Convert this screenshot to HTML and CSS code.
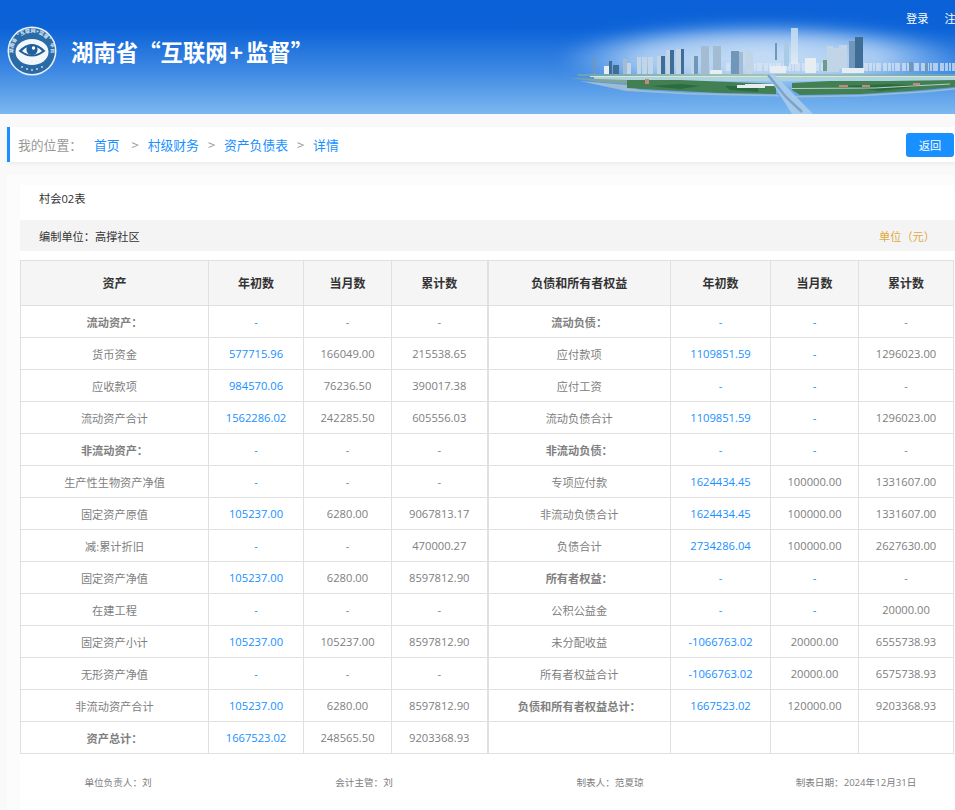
FILE: index.html
```html
<!DOCTYPE html>
<html lang="zh-CN">
<head>
<meta charset="utf-8">
<title>资产负债表详情</title>
<link rel="stylesheet" href="styles.css">
</head>
<body>
<header class="top">
  <svg class="skyline" viewBox="0 0 425 114" aria-hidden="true">
    <defs>
      <radialGradient id="glow" cx="50%" cy="50%" r="50%">
        <stop offset="0" stop-color="#d5e6f8" stop-opacity=".95"/>
        <stop offset=".6" stop-color="#c6def7" stop-opacity=".8"/>
        <stop offset="1" stop-color="#a9d0f5" stop-opacity="0"/>
      </radialGradient>
      <linearGradient id="tower" x1="0" y1="0" x2="0" y2="1">
        <stop offset="0" stop-color="#b7d4f1"/>
        <stop offset="1" stop-color="#dfeaf3"/>
      </linearGradient>
      <linearGradient id="bandfade" x1="0" y1="0" x2="1" y2="0">
        <stop offset="0" stop-color="#8fb0cf" stop-opacity="0"/>
        <stop offset=".14" stop-color="#8fb0cf" stop-opacity=".85"/>
        <stop offset="1" stop-color="#a9c0d6"/>
      </linearGradient>
      <filter id="soft" x="-5%" y="-5%" width="110%" height="110%"><feGaussianBlur stdDeviation=".7"/></filter>
      <filter id="wide" x="-10%" y="-30%" width="120%" height="160%"><feGaussianBlur stdDeviation="7"/></filter>
    </defs>
    <ellipse cx="232" cy="58" rx="205" ry="36" fill="url(#glow)" filter="url(#wide)"/>
    <g filter="url(#soft)">
      <path class="city-band" d="M20 69 H425" stroke="url(#bandfade)" stroke-dasharray="3 1 2 1 4 1 2 2 3 1"/>
      <path class="city-band2" d="M196 67 H300 M334 67 H425" stroke-dasharray="4 1 3 1 2 1 5 2"/>
      <rect class="b-mid" x="63" y="57" width="2" height="17"/>
      <rect class="b-dark" x="79" y="61" width="3" height="13"/>
      <rect class="b-dark" x="83" y="65" width="6" height="9"/>
      <rect class="b-white" x="74" y="66" width="5" height="8"/>
      <rect class="b-grey" x="93" y="59" width="4" height="15"/>
      <rect class="b-pale" x="97" y="63" width="4" height="11"/>
      <rect class="b-pale" x="107" y="57" width="4" height="17"/>
      <rect class="b-pale" x="112" y="57" width="5" height="17"/>
      <rect class="b-pale" x="118" y="57" width="5" height="17"/>
      <rect class="b-pale" x="127" y="56" width="4" height="18"/>
      <rect class="b-dark" x="131" y="56" width="4" height="18"/>
      <rect class="b-pale" x="136" y="50" width="4" height="24"/>
      <rect class="b-dark" x="140" y="50" width="4" height="24"/>
      <rect class="b-pale" x="146" y="49" width="5" height="25"/>
      <rect class="b-dark" x="151" y="49" width="3" height="25"/>
      <rect class="b-pale" x="161" y="56" width="3" height="18"/>
      <rect class="b-mid" x="164" y="56" width="4" height="18"/>
      <rect class="b-grey" x="171" y="46" width="8" height="28"/>
      <rect class="b-grey" x="183" y="46" width="8" height="26"/>
      <rect class="b-white" x="180" y="70" width="12" height="4"/>
      <rect class="b-mid" x="201" y="51" width="8" height="23"/>
      <rect class="b-grey" x="209" y="52" width="4" height="22"/>
      <rect class="b-pale" x="215" y="51" width="8" height="23"/>
      <rect class="b-mid" x="245" y="43" width="2" height="17"/>
      <rect class="b-light" x="254" y="42" width="5" height="24"/>
      <rect class="b-tall" x="261" y="28" width="7" height="36"/>
      <rect class="b-white" x="240" y="66" width="16" height="7"/>
      <rect class="b-white" x="275" y="58" width="11" height="15"/>
      <rect class="b-pale" x="297" y="46" width="6" height="26"/>
      <rect class="b-pale" x="303" y="48" width="6" height="24"/>
      <rect class="b-pale" x="309" y="45" width="8" height="24"/>
      <rect class="b-mid" x="319" y="41" width="6" height="28"/>
      <rect class="b-dark" x="325" y="37" width="8" height="32"/>
      <rect class="b-white" x="312" y="68" width="22" height="5"/>
      <rect class="b-green" x="293" y="60" width="4" height="11"/>
      <rect class="b-mid" x="379" y="62" width="4" height="10"/>
      <rect class="b-mid" x="395" y="63" width="3" height="9"/>
      <path class="shore" d="M48 75 H425"/>
      <path class="bank" d="M60 76.5 H425"/>
      <rect class="river" x="64" y="77" width="361" height="4"/>
      <path class="spit" d="M50 81 L96 85 L110 90 L160 93 L248 95 L250 96.5 L160 94.5 L96 91 Z"/>
      <path class="spit" d="M262 96 L330 95 L395 91 L425 88 L425 89.5 L395 92.5 L330 96.5 L262 97.5 Z"/>
      <path class="scrub" d="M40 78 L97 80 L100 84 L70 82 Z"/>
      <path class="green" d="M97 80 L150 80 L200 82 L246 84 L246 94 L190 93 L130 90 L97 88 Z"/>
      <path class="green" d="M262 90 L262 83 L300 81 L360 81 L425 80 L425 87 L380 91 L330 94 L270 95 Z"/>
      <path class="dark-trees" d="M120 86 L150 84 L170 86 L150 89 Z M195 86 L228 86 L228 92 L200 90 Z M310 86 L360 84 L392 86 L350 91 Z"/>
      <path class="road" d="M262 88.5 L345 88 L420 84"/>
      <rect class="b-white" x="207" y="85" width="28" height="3"/>
      <rect class="b-white" x="215" y="84" width="30" height="2"/>
      <rect class="roof" x="309" y="85" width="9" height="2"/>
      <rect class="roof" x="332" y="85" width="8" height="2"/>
      <rect class="roof" x="383" y="83" width="7" height="2"/>
      <rect class="roof" x="115" y="79" width="4" height="5"/>
    </g>
    <path class="bridge" d="M236 73 L243 73 L283 114 L262 114 Z" filter="url(#soft)"/>
    <path class="bridge-deck" d="M238 75 L256 97 L272 112" filter="url(#soft)"/>
  </svg>

  <svg class="logo" viewBox="0 0 50 50" aria-hidden="true">
    <defs><path id="ringpath" d="M7.5 33 A19 19 0 1 1 42.5 33"/></defs>
    <circle cx="25" cy="25" r="24.5" fill="#e8f0f8"/>
    <circle cx="25" cy="25" r="23" fill="#2a6aa6"/>
    <ellipse cx="25" cy="26" rx="16.5" ry="13" fill="#f2f7fb"/>
    <path d="M11.5 25 Q25 11 38.5 25 Q25 36 11.5 25 Z" fill="#1f5f9c"/>
    <path d="M15 25 Q25 15 35 25 Q25 32.5 15 25 Z" fill="#f6fafd"/>
    <circle cx="25" cy="23.5" r="5.6" fill="#1f5f9c"/>
    <circle cx="26.5" cy="22" r="1.7" fill="#fff"/>
    <text class="logo-ring"><textPath href="#ringpath" startOffset="50%" text-anchor="middle">湖南省“互联网+监督”平台</textPath></text>
    <g fill="#cfe0f0"><circle cx="15" cy="41" r=".9"/><circle cx="20" cy="43" r=".9"/><circle cx="25" cy="44" r=".9"/><circle cx="30" cy="43" r=".9"/><circle cx="35" cy="41" r=".9"/></g>
  </svg>
  <h1 class="site-title">湖南省“互联网<span class="plus">+</span>监督”</h1>
  <nav class="user-nav"><a>登录</a><a>注册</a></nav>
</header>

<div class="crumbs">
  <span class="here">我的位置：</span>
  <a class="crumb first">首页</a><span class="sep">&gt;</span>
  <a class="crumb">村级财务</a><span class="sep">&gt;</span>
  <a class="crumb">资产负债表</a><span class="sep">&gt;</span>
  <a class="crumb">详情</a>
  <button class="back">返回</button>
</div>

<main class="panel">
  <div class="sheet">
    <div class="form-no">村会02表</div>
    <div class="unit-bar"><span>编制单位：高撑社区</span><span class="unit">单位（元）</span></div>
    <table class="ledger">
      <colgroup>
        <col class="c1"><col class="c2"><col class="c3"><col class="c4">
        <col class="c5"><col class="c6"><col class="c7"><col class="c8">
      </colgroup>
      <thead>
        <tr><th>资产</th><th>年初数</th><th>当月数</th><th>累计数</th><th class="mid">负债和所有者权益</th><th>年初数</th><th>当月数</th><th>累计数</th></tr>
      </thead>
      <tbody>
        <tr><td class="b">流动资产：</td><td class="l">-</td><td>-</td><td>-</td><td class="b mid">流动负债：</td><td class="l">-</td><td class="l">-</td><td>-</td></tr>
        <tr><td>货币资金</td><td class="l">577715.96</td><td>166049.00</td><td>215538.65</td><td class="mid">应付款项</td><td class="l">1109851.59</td><td class="l">-</td><td>1296023.00</td></tr>
        <tr><td>应收款项</td><td class="l">984570.06</td><td>76236.50</td><td>390017.38</td><td class="mid">应付工资</td><td class="l">-</td><td class="l">-</td><td>-</td></tr>
        <tr><td>流动资产合计</td><td class="l">1562286.02</td><td>242285.50</td><td>605556.03</td><td class="mid">流动负债合计</td><td class="l">1109851.59</td><td class="l">-</td><td>1296023.00</td></tr>
        <tr><td class="b">非流动资产：</td><td class="l">-</td><td>-</td><td>-</td><td class="b mid">非流动负债：</td><td class="l">-</td><td class="l">-</td><td>-</td></tr>
        <tr><td>生产性生物资产净值</td><td class="l">-</td><td>-</td><td>-</td><td class="mid">专项应付款</td><td class="l">1624434.45</td><td>100000.00</td><td>1331607.00</td></tr>
        <tr><td>固定资产原值</td><td class="l">105237.00</td><td>6280.00</td><td>9067813.17</td><td class="mid">非流动负债合计</td><td class="l">1624434.45</td><td>100000.00</td><td>1331607.00</td></tr>
        <tr><td>减:累计折旧</td><td class="l">-</td><td>-</td><td>470000.27</td><td class="mid">负债合计</td><td class="l">2734286.04</td><td>100000.00</td><td>2627630.00</td></tr>
        <tr><td>固定资产净值</td><td class="l">105237.00</td><td>6280.00</td><td>8597812.90</td><td class="b mid">所有者权益：</td><td class="l">-</td><td class="l">-</td><td>-</td></tr>
        <tr><td>在建工程</td><td class="l">-</td><td>-</td><td>-</td><td class="mid">公积公益金</td><td class="l">-</td><td class="l">-</td><td>20000.00</td></tr>
        <tr><td>固定资产小计</td><td class="l">105237.00</td><td>105237.00</td><td>8597812.90</td><td class="mid">未分配收益</td><td class="l">-1066763.02</td><td>20000.00</td><td>6555738.93</td></tr>
        <tr><td>无形资产净值</td><td class="l">-</td><td>-</td><td>-</td><td class="mid">所有者权益合计</td><td class="l">-1066763.02</td><td>20000.00</td><td>6575738.93</td></tr>
        <tr><td>非流动资产合计</td><td class="l">105237.00</td><td>6280.00</td><td>8597812.90</td><td class="b mid">负债和所有者权益总计：</td><td class="l">1667523.02</td><td>120000.00</td><td>9203368.93</td></tr>
        <tr><td class="b">资产总计：</td><td class="l">1667523.02</td><td>248565.50</td><td>9203368.93</td><td class="mid"></td><td></td><td></td><td></td></tr>
      </tbody>
    </table>
    <div class="signoff">
      <span>单位负责人：刘</span>
      <span>会计主管：刘</span>
      <span>制表人：范夏琼</span>
      <span>制表日期：2024年12月31日</span>
    </div>
  </div>
</main>
</body>
</html>
```

FILE: styles.css
```css
* { box-sizing: border-box; }
html, body { margin: 0; height: 810px; overflow: hidden; }
body {
  width: 955px;
  background: #f9f9f9;
  font-family: "Open Sans", "Noto Sans CJK SC", sans-serif;
  font-size: 11.2px;
  color: #808080;
}

.top {
  position: relative;
  height: 114px;
  display: flex;
  align-items: center;
  padding: 0 0 13px 7px;
  overflow: hidden;
  background: linear-gradient(180deg, #0a60d6 0%, #0c63d8 25%, #3d88e3 62%, #7cb8f0 100%);
}
.skyline { position: absolute; right: 0; top: 0; width: 425px; height: 114px; }
.city-band { stroke-width: 10; fill: none; }
.city-band2 { stroke-width: 8; fill: none; stroke: #dbe5ee; opacity: .7; }
.b-dark { fill: #3f6d96; }
.b-mid { fill: #6f97ba; }
.b-grey { fill: #a4bcd2; }
.b-pale { fill: #c2d5e6; }
.b-light { fill: #a8cbe8; }
.b-tall { fill: url(#tower); }
.b-white { fill: #e6eef2; }
.b-green { fill: #6b9c8a; }
.shore { stroke: #8fb67c; stroke-width: 1.2; fill: none; }
.bank { stroke: #e3e4cf; stroke-width: 1.2; fill: none; }
.river { fill: #a9d4e0; }
.green { fill: #427f52; }
.dark-trees { fill: #2a6c3d; }
.scrub { fill: #7fa59a; }
.spit { fill: #9dbcd4; }
.road { stroke: #b5cdc9; stroke-width: 1; fill: none; }
.roof { fill: #c9877a; }
.bridge { fill: #a9cdec; opacity: .9; }
.bridge-deck { stroke: #7fa3c6; stroke-width: 2.5; fill: none; }

.logo { position: relative; width: 50px; height: 50px; flex: none; }
.logo-ring { font-family: "Noto Sans CJK SC", sans-serif; font-size: 5px; font-weight: 700; fill: #dbe8f4; }
.site-title {
  position: relative;
  margin: 0 0 0 14px;
  font-family: "Noto Sans CJK SC", sans-serif;
  font-size: 22.4px;
  font-weight: 700;
  color: #fff;
  white-space: nowrap;
}
.plus { margin: 0 3px 0 2px; }
.user-nav {
  position: absolute;
  left: 906px;
  top: 10px;
  display: flex;
  gap: 16px;
  color: #fff;
  white-space: nowrap;
}

.crumbs {
  display: flex;
  align-items: center;
  width: 948px;
  height: 35px;
  margin: 13px 0 0 7px;
  padding-left: 8px;
  background: #fff;
  border-left: 3px solid #1890ff;
  box-shadow: 0 2px 4px rgba(0,0,0,.06);
  font-family: "Noto Sans CJK SC", sans-serif;
  font-size: 12.8px;
}
.here { color: #999; margin-right: 12px; }
.crumb { color: #1890ff; }
.sep { color: #999; margin: 0 9px 0 9px; }
.crumb.first + .sep { margin: 0 9px 0 12px; }
.back {
  margin: 0 1px 0 auto;
  width: 48px;
  height: 24px;
  padding: 0;
  border: 0;
  border-radius: 3px;
  background: #1890ff;
  color: #fff;
  font: inherit;
  font-size: 11.2px;
}

.panel {
  width: 948px;
  margin: 13px 0 0 7px;
  padding: 10px 0 0 13px;
  background: #fcfcfc;
}
.sheet { background: #fff; width: 935px; height: 640px; }
.form-no { height: 35px; padding: 5px 0 0 19px; color: #333; }
.unit-bar {
  display: flex;
  justify-content: space-between;
  align-items: center;
  height: 31px;
  padding: 0 20px 0 19px;
  background: #f4f4f4;
  color: #333;
}
.unit { color: #e0a93f; }

.ledger {
  width: 934px;
  margin-top: 9px;
  table-layout: fixed;
  border-collapse: collapse;
}
.c1 { width: 188px; } .c2 { width: 95px; } .c3 { width: 88px; } .c4 { width: 96px; }
.c5 { width: 183px; } .c6 { width: 100px; } .c7 { width: 88px; } .c8 { width: 95px; }
.ledger th, .ledger td {
  border: 1px solid #e0e0e0;
  padding: 0;
  text-align: center;
  font-weight: 400;
}
.ledger th {
  height: 45px;
  background: #f5f5f5;
  color: #333;
  font-size: 12px;
  font-weight: 700;
}
.ledger td { height: 32px; }
.ledger th.mid, .ledger td.mid { border-left: 2px solid #e0e0e0; }
.ledger td.b { font-weight: 700; }
.ledger td.l { color: #1890ff; }

.signoff {
  height: 55px;
  display: grid;
  grid-template-columns: repeat(4, 196px);
  column-gap: 50px;
  align-items: center;
  justify-items: center;
  font-size: 9.6px;
  white-space: nowrap;
}
```
